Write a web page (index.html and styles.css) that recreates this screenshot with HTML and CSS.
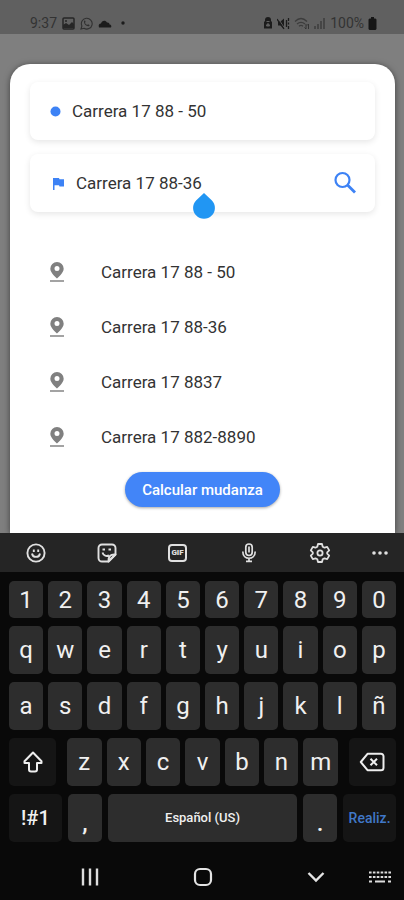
FILE: index.html
```html
<!DOCTYPE html>
<html lang="es">
<head>
    <meta charset="UTF-8">
    <meta name="viewport" content="width=device-width, initial-scale=1.0">
    <title>Calcular mudanza</title>
    <link rel="stylesheet" href="styles.css">
</head>
<body>
<header class="status-bar">
    <div class="status-group">
        <span>9:37</span>
        <svg width="13" height="13" viewBox="0 0 13 13"><rect x="1" y="1" width="11" height="11" rx="1" fill="none" stroke="#262626" stroke-width="1.5"/><path d="M1 11V8l3-2 3 2 3-3 2 2v4z" fill="#262626"/><circle cx="4" cy="4" r="1" fill="#262626"/></svg>
        <svg width="13" height="13" viewBox="0 0 13 13"><path d="M1 12l.9-3A5.4 5.4 0 1 1 4 11.3z" fill="none" stroke="#303030" stroke-width="1.1"/><path d="M4.5 3.5c-1.500 1.200.2 5.500 4 5.800.8 0 1.200-.8 1-1.300L8 7.200l-.8.7C6 7.500 5.300 6.500 5 5.700l.6-.7-.5-1.500z" fill="#303030"/></svg>
        <svg width="14" height="9" viewBox="0 0 14 9"><path d="M1 8.500C0 6 1.500 4.500 3 4.600 3.500 1.500 7.500.5 9 3.500c2-.3 2.500 1 2.500 2 2 0 2.200 2 1.500 3z" fill="#1c1c1c"/></svg>
        <svg class="dot" width="4" height="4" viewBox="0 0 4 4"><circle cx="2" cy="2" r="1.700" fill="#1c1c1c"/></svg>
    </div>
    <div class="status-group status-right">
        <svg width="10" height="13" viewBox="0 0 10 13"><path d="M2 4V3a3 3 0 0 1 6 0v1l1 1v6.500H1V5z" fill="#1c1c1c"/><path d="M3.500 4.500h3M3.500 9c0-3 3-3 3 0z" stroke="#606060" fill="#606060"/></svg>
        <svg width="13" height="13" viewBox="0 0 13 13"><path d="M1 4.500h2.500L7 1.500v10L3.500 8.500H1z" fill="#1c1c1c"/><path d="M1 1l7 11" stroke="#606060"/><path d="M0 2l7 10M9.500 3v7M11.500 1v3M11.500 5.500v2M11.500 9v3" stroke="#1c1c1c" stroke-width="1.300"/></svg>
        <svg width="16" height="13" viewBox="0 0 16 13"><path d="M1 4.500c4-4 8-4 12 0M3 7c3-2.500 5-2.500 8 0M5 9.200c1.500-1.200 2.500-1.200 4 0M7 11.500h.1" fill="none" stroke="#3c3c3c" stroke-width="1.300"/><path d="M12 7v5M10.500 10.500L12 12M14.500 12V7M13 8.500L14.500 7" fill="none" stroke="#333" stroke-width="1"/></svg>
        <svg width="12" height="12" viewBox="0 0 12 12"><path d="M1 9v3M4 7v5M7 4v8M10 1v11" stroke="#3c3c3c" stroke-width="1.500"/></svg>
        <span>100%</span>
        <svg width="9" height="13" viewBox="0 0 9 13"><path d="M3 0h3v1.500h1.500l1 1V12l-1 1h-6l-1-1V2.500l1-1H3z" fill="#161616"/></svg>
    </div>
</header>

<main class="backdrop">
    <form class="card">
        <div class="field">
            <svg width="11" height="11" viewBox="0 0 11 11"><circle cx="5.500" cy="5.500" r="5" fill="#3d82f5"/></svg>
            <input class="field-input" type="text" value="Carrera 17 88 - 50" aria-label="Origen">
        </div>
        <div class="field">
            <svg class="flag" width="13" height="13" viewBox="0 0 13 13"><path d="M1 1h6l.5 1.200H12v7.300H7.500L7 8.300H2.500V13H1z" fill="#3d82f5"/></svg>
            <input class="field-input" type="text" value="Carrera 17 88-36" aria-label="Destino">
            <button class="search-button" type="button" aria-label="Buscar">
                <svg width="24" height="24" viewBox="0 0 24 24" fill="none" stroke="#3d82f5"><circle cx="9.500" cy="9" r="7" stroke-width="2.200"/><path d="M14.500 14l7.500 7.500" stroke-width="2.800"/></svg>
            </button>
            <!-- tirador del cursor de texto -->
            <svg class="cursor-handle" width="24" height="26" viewBox="0 0 24 26"><path d="M12 0l7.700 7.200a10.900 10.900 0 1 1-15.400 0z" fill="#2196f3"/></svg>
        </div>

        <ul class="suggestions">
            <li><button class="suggestion" type="button"><svg width="16" height="22" viewBox="0 0 16 22"><path fill-rule="evenodd" d="M8 1a6.700 6.700 0 0 1 6.700 6.700C14.700 12 8 17.500 8 17.500S1.300 12 1.300 7.700A6.700 6.700 0 0 1 8 1zM8 5a2.500 2.500 0 1 0 0 5 2.500 2.500 0 0 0 0-5z" fill="#808080"/><path d="M1 20h14" stroke="#999" stroke-width="1.800"/></svg><span>Carrera 17 88 - 50</span></button></li>
            <li><button class="suggestion" type="button"><svg width="16" height="22" viewBox="0 0 16 22"><path fill-rule="evenodd" d="M8 1a6.700 6.700 0 0 1 6.700 6.700C14.700 12 8 17.500 8 17.500S1.300 12 1.300 7.700A6.700 6.700 0 0 1 8 1zM8 5a2.500 2.500 0 1 0 0 5 2.500 2.500 0 0 0 0-5z" fill="#808080"/><path d="M1 20h14" stroke="#999" stroke-width="1.800"/></svg><span>Carrera 17 88-36</span></button></li>
            <li><button class="suggestion" type="button"><svg width="16" height="22" viewBox="0 0 16 22"><path fill-rule="evenodd" d="M8 1a6.700 6.700 0 0 1 6.700 6.700C14.700 12 8 17.500 8 17.500S1.300 12 1.300 7.700A6.700 6.700 0 0 1 8 1zM8 5a2.500 2.500 0 1 0 0 5 2.500 2.500 0 0 0 0-5z" fill="#808080"/><path d="M1 20h14" stroke="#999" stroke-width="1.800"/></svg><span>Carrera 17 8837</span></button></li>
            <li><button class="suggestion" type="button"><svg width="16" height="22" viewBox="0 0 16 22"><path fill-rule="evenodd" d="M8 1a6.700 6.700 0 0 1 6.700 6.700C14.700 12 8 17.500 8 17.500S1.300 12 1.300 7.700A6.700 6.700 0 0 1 8 1zM8 5a2.500 2.500 0 1 0 0 5 2.500 2.500 0 0 0 0-5z" fill="#808080"/><path d="M1 20h14" stroke="#999" stroke-width="1.800"/></svg><span>Carrera 17 882-8890</span></button></li>
        </ul>

        <button class="submit-button" type="submit">Calcular mudanza</button>
    </form>
</main>

<section class="keyboard" aria-label="Teclado">
    <div class="toolbar">
        <button class="tool" type="button" aria-label="Emojis"><svg width="22" height="22" viewBox="0 0 22 22" fill="none" stroke="#e0e0e0" stroke-width="1.900"><circle cx="11" cy="11" r="8.600"/><path d="M7 11.500c.7 4.500 7.300 4.500 8 0M8.800 7.500v2.500M13.200 7.500v2.500"/></svg></button>
        <button class="tool" type="button" aria-label="Stickers"><svg width="22" height="22" viewBox="0 0 22 22" fill="none" stroke="#e0e0e0" stroke-width="1.900" stroke-linejoin="round"><path d="M6 2.500h10a3.500 3.500 0 0 1 3.500 3.500v6.500l-7 7H6A3.500 3.500 0 0 1 2.500 16V6A3.500 3.500 0 0 1 6 2.500z"/><path d="M19.500 12.500c-5-.5-7 1.500-7 7zM6.500 10.500c1 3.500 4 4 6.500 3M6.500 7.500h2.500M12.500 7.500h2.500"/></svg></button>
        <button class="tool" type="button" aria-label="GIF"><span class="gif-icon">GIF</span></button>
        <button class="tool" type="button" aria-label="Voz"><svg width="22" height="22" viewBox="0 0 22 22" fill="none" stroke="#e0e0e0" stroke-width="1.700"><rect x="7.800" y="2" width="6.400" height="11.500" rx="3.200"/><path d="M11 4.500v6M4.800 9.500c0 9 12.400 9 12.400 0M11 16v3.500M8 19.300h6"/></svg></button>
        <button class="tool" type="button" aria-label="Ajustes"><svg width="22" height="22" viewBox="0 0 22 22" fill="none" stroke="#e0e0e0" stroke-width="1.800" stroke-linejoin="round"><path d="M9 2h4l.7 2.700 1.800 1 2.700-.8 2 3.500-2 1.900v1.400l2 1.900-2 3.500-2.700-.8-1.800 1L13 20H9l-.7-2.700-1.800-1-2.700.8-2-3.500 2-1.900v-1.400l-2-1.900 2-3.500 2.700.8 1.800-1z"/><circle cx="11" cy="11" r="2.600"/></svg></button>
        <button class="tool tool-more" type="button" aria-label="Más"><svg width="18" height="6" viewBox="0 0 18 6" fill="#e0e0e0"><circle cx="3" cy="3" r="1.800"/><circle cx="9" cy="3" r="1.800"/><circle cx="15" cy="3" r="1.800"/></svg></button>
    </div>

    <div class="keys">
        <div class="row row-numbers">
            <button class="key">1</button><button class="key">2</button><button class="key">3</button><button class="key">4</button><button class="key">5</button><button class="key">6</button><button class="key">7</button><button class="key">8</button><button class="key">9</button><button class="key">0</button>
        </div>
        <div class="row">
            <button class="key">q</button><button class="key">w</button><button class="key">e</button><button class="key">r</button><button class="key">t</button><button class="key">y</button><button class="key">u</button><button class="key">i</button><button class="key">o</button><button class="key">p</button>
        </div>
        <div class="row">
            <button class="key">a</button><button class="key">s</button><button class="key">d</button><button class="key">f</button><button class="key">g</button><button class="key">h</button><button class="key">j</button><button class="key">k</button><button class="key">l</button><button class="key">ñ</button>
        </div>
        <div class="row row-shift">
            <button class="key key-dark" aria-label="Mayúsculas"><svg width="22" height="24" viewBox="0 0 22 24" fill="none" stroke="#eee" stroke-width="2" stroke-linejoin="round"><path d="M11 2.500l8.500 8.700v1.800H15v6.500a2 2 0 0 1-2 2H9a2 2 0 0 1-2-2V13H2.500v-1.800z"/></svg></button>
            <div class="letters">
                <button class="key">z</button><button class="key">x</button><button class="key">c</button><button class="key">v</button><button class="key">b</button><button class="key">n</button><button class="key">m</button>
            </div>
            <button class="key key-dark" aria-label="Borrar"><svg width="26" height="20" viewBox="0 0 26 20" fill="none" stroke="#eee" stroke-width="2" stroke-linejoin="round"><path d="M8.500 1.800H22a2.500 2.500 0 0 1 2.500 2.500v11.400a2.500 2.500 0 0 1-2.500 2.500H8.500L1.800 10z"/><path d="M11.500 6.700l6.500 6.600M18 6.700l-6.500 6.600"/></svg></button>
        </div>
        <div class="row row-space">
            <button class="key key-dark key-symbols">!#1</button>
            <button class="key key-mark">,</button>
            <button class="key key-space">Español (US)</button>
            <button class="key key-mark">.</button>
            <button class="key key-dark key-done">Realiz.</button>
        </div>
    </div>

    <nav class="nav-bar">
        <button class="nav-button" aria-label="Recientes"><svg width="20" height="20" viewBox="0 0 20 20"><path d="M3 1.500v17M10 1.500v17M17 1.500v17" stroke="#ddd" stroke-width="2.400"/></svg></button>
        <button class="nav-button" aria-label="Inicio"><svg width="20" height="20" viewBox="0 0 20 20"><rect x="2" y="2" width="16" height="16" rx="5" fill="none" stroke="#e4e4e4" stroke-width="2.200"/></svg></button>
        <button class="nav-button" aria-label="Ocultar teclado"><svg width="20" height="20" viewBox="0 0 20 20"><path d="M2.500 6l7.500 7.500L17.500 6" fill="none" stroke="#e4e4e4" stroke-width="2.400"/></svg></button>
        <button class="nav-button nav-keyboard" aria-label="Cambiar teclado"><svg width="22" height="12" viewBox="0 0 22 12" stroke="#ddd" stroke-width="2.200"><path d="M0 1.500h22M0 6h22" stroke-dasharray="2.600 1.280"/><path d="M0 10.500h3M6 10.500h10M19 10.500h3"/></svg></button>
    </nav>
</section>
</body>
</html>
```

FILE: styles.css
```css
* {
    box-sizing: border-box;
}

body {
    margin: 0;
    min-height: 100vh;
    display: flex;
    flex-direction: column;
    background-color: #7f7f7f;
    font-family: Roboto, "Liberation Sans", sans-serif;
}

button,
input {
    margin: 0;
    padding: 0;
    border: none;
    background: none;
    font-family: inherit;
}

svg {
    display: block;
    flex-shrink: 0;
}

/* barra de estado */
.status-bar {
    display: flex;
    justify-content: space-between;
    padding: 14px 27px 2px 30px;
    background-color: #606060;
    color: #333;
    font-size: 14px;
    line-height: 18px;
}

.status-group {
    display: flex;
    align-items: center;
    gap: 5px;
}

.status-right {
    gap: 4px;
}

.dot {
    margin-left: 4px;
}

/* tarjeta */
.backdrop {
    flex: 1;
    display: flex;
    padding: 30px 9px 0 10px;
}

.card {
    flex: 1;
    display: flex;
    flex-direction: column;
    gap: 14px;
    padding: 18px 20px 26px;
    background-color: #fff;
    border-radius: 20px 20px 0 0;
    box-shadow: 0 1px 6px rgba(0, 0, 0, 0.5);
}

.field {
    position: relative;
    display: flex;
    align-items: center;
    gap: 11px;
    height: 58px;
    padding: 0 18px 0 20px;
    background-color: #fff;
    border-radius: 8px;
    box-shadow: 0 2px 6px rgba(0, 0, 0, 0.1);
}

.flag {
    margin-left: 2px;
}

.field-input {
    flex: 1;
    min-width: 0;
    color: #333;
    font-size: 17px;
    line-height: 24px;
    outline: none;
}

.cursor-handle {
    position: absolute;
    top: 39px;
    left: 162px;
}

.suggestions {
    margin: 18px 0 0;
    padding: 0;
    list-style: none;
}

.suggestion {
    display: flex;
    align-items: center;
    gap: 36px;
    width: 100%;
    height: 55px;
    padding-left: 19px;
    color: #333;
    font-size: 17px;
    line-height: 24px;
}

.submit-button {
    align-self: center;
    margin-top: -6px;
    height: 35px;
    padding: 0 17px;
    border-radius: 18px;
    background-color: #4285f8;
    box-shadow: 0 1px 3px rgba(0, 0, 0, 0.35);
    color: #fff;
    font-size: 15px;
    font-weight: 500;
}

/* teclado */
.keyboard {
    background-color: #090909;
    position: relative;
}

.toolbar {
    display: flex;
    align-items: center;
    height: 39px;
    background-color: #252525;
}

.tool {
    flex: 71;
    display: flex;
    justify-content: center;
}

.tool-more {
    flex: 49;
}

.gif-icon {
    width: 19px;
    border: 2px solid #e0e0e0;
    border-radius: 4px;
    color: #e0e0e0;
    font-size: 8px;
    font-weight: 900;
    line-height: 14px;
}

.keys {
    display: flex;
    flex-direction: column;
    gap: 8px;
    padding: 9px 8px 0 9px;
}

.row {
    display: flex;
    gap: 5px;
    height: 48px;
}

.row-numbers {
    height: 37px;
}

.key {
    flex: 1;
    display: flex;
    align-items: center;
    justify-content: center;
    min-width: 0;
    border-radius: 5px;
    background-color: #2d2d2d;
    color: #f0f0f0;
    font-size: 24px;
    line-height: 28px;
}

.key-dark {
    background-color: #151515;
}

.row-shift {
    gap: 11px;
}

.row-shift .key-dark {
    flex: 47;
}

.letters {
    flex: 270;
    display: flex;
    gap: 5px;
}

.row-space {
    gap: 6px;
}

.key-symbols,
.key-done {
    flex: 53;
    font-size: 20px;
    font-weight: 500;
}

.key-mark {
    flex: 34;
    padding-top: 10px;
    font-weight: 500;
}

.key-space {
    flex: 190;
    font-size: 13px;
    font-weight: 500;
}

.key-done {
    color: #4078c8;
    font-size: 14px;
}

/* barra de navegación */
.nav-bar {
    display: flex;
    align-items: center;
    height: 58px;
    padding: 12px 17px 0 33px;
}

.nav-button {
    flex: 113;
    display: flex;
    justify-content: center;
    min-width: 0;
}

.nav-keyboard {
    flex: 15;
}
```
